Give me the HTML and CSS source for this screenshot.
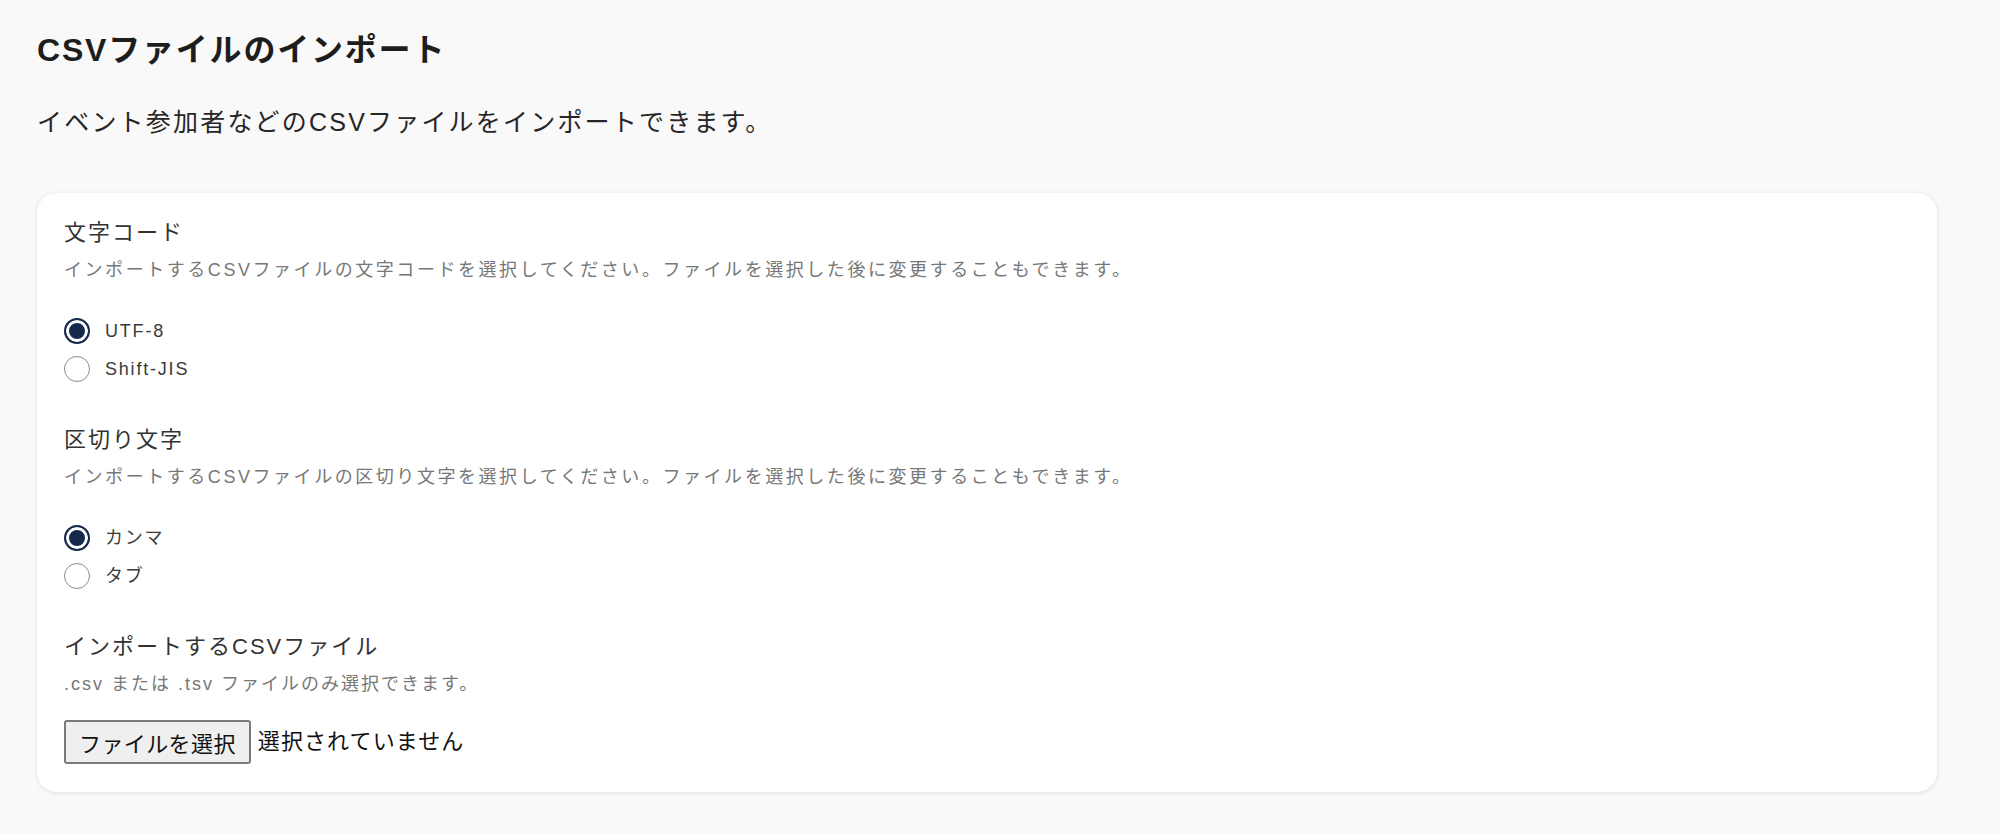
FILE: index.html
```html
<!DOCTYPE html>
<html lang="ja">
<head>
<meta charset="utf-8">
<title>CSVファイルのインポート</title>
<link rel="stylesheet" href="styles.css">
</head>
<body>
<main class="page">
  <h1 class="page-title">CSVファイルのインポート</h1>
  <p class="page-lead">イベント参加者などのCSVファイルをインポートできます。</p>

  <section class="card">
    <div class="field">
      <div class="field-label">文字コード</div>
      <p class="field-help">インポートするCSVファイルの文字コードを選択してください。ファイルを選択した後に変更することもできます。</p>
      <div class="radio-list">
        <label class="radio"><input class="radio-input" type="radio" name="encoding" checked><span class="radio-text">UTF-8</span></label>
        <label class="radio"><input class="radio-input" type="radio" name="encoding"><span class="radio-text">Shift-JIS</span></label>
      </div>
    </div>

    <div class="field">
      <div class="field-label">区切り文字</div>
      <p class="field-help">インポートするCSVファイルの区切り文字を選択してください。ファイルを選択した後に変更することもできます。</p>
      <div class="radio-list">
        <label class="radio"><input class="radio-input" type="radio" name="delimiter" checked><span class="radio-text">カンマ</span></label>
        <label class="radio"><input class="radio-input" type="radio" name="delimiter"><span class="radio-text">タブ</span></label>
      </div>
    </div>

    <div class="field">
      <div class="field-label">インポートするCSVファイル</div>
      <p class="field-help field-help-short">.csv または .tsv ファイルのみ選択できます。</p>
      <div class="file-input">
        <button class="file-button" type="button">ファイルを選択</button>
        <span class="file-status">選択されていません</span>
      </div>
    </div>
  </section>
</main>
</body>
</html>
```

FILE: styles.css
```css
* {
  box-sizing: border-box;
}

html, body {
  margin: 0;
  padding: 0;
  background: #f9f9f9;
}

body {
  font-family: "Liberation Sans", "Noto Sans CJK JP", sans-serif;
  color: #222;
}

.page {
  width: 1937px;
  padding: 29px 0 40px 37px;
}

.page-title {
  margin: 0;
  font-size: 32px;
  line-height: 42px;
  font-weight: 700;
  letter-spacing: 1.8px;
  color: #1d1d1d;
}

.page-lead {
  margin: 33px 0 0;
  font-size: 25px;
  line-height: 36px;
  letter-spacing: 2.2px;
  color: #262626;
}

.card {
  margin-top: 53px;
  background: #fff;
  border-radius: 20px;
  box-shadow: 0 1px 5px rgba(0, 0, 0, 0.10), 0 0 1px rgba(0, 0, 0, 0.06);
  padding: 24px 27px 28px;
  display: flex;
  flex-direction: column;
  gap: 36px;
}

.field-label {
  font-size: 22px;
  line-height: 32px;
  letter-spacing: 2px;
  color: #333;
}

.field-help {
  margin: 7px 0 0;
  font-size: 18px;
  line-height: 28px;
  letter-spacing: 2.55px;
  color: #777;
}

.field-help-short {
  letter-spacing: 2px;
}

.radio-list {
  margin-top: 28px;
  display: flex;
  flex-direction: column;
}

.radio {
  display: flex;
  align-items: center;
  height: 38px;
  gap: 15px;
}

.radio-input {
  appearance: none;
  -webkit-appearance: none;
  margin: 0;
  width: 26px;
  height: 26px;
  border-radius: 50%;
  border: 1.5px solid #8c8c8c;
  background: #fff;
  flex: none;
}

.radio-input:checked {
  border: 2.5px solid #15294c;
  background: #15294c;
  box-shadow: inset 0 0 0 3px #fff;
}

.radio-text {
  font-size: 18px;
  line-height: 28px;
  letter-spacing: 1.8px;
  color: #3a3a3a;
}

.file-input {
  margin-top: 22px;
  display: flex;
  align-items: center;
  gap: 7px;
}

.file-button {
  height: 44px;
  padding: 0 13px;
  font-family: "Liberation Sans", "Noto Sans CJK JP", sans-serif;
  font-size: 22px;
  letter-spacing: 0.4px;
  color: #111;
  background: #efefef;
  border: 2px solid #7a7a7a;
  border-radius: 3px;
}

.file-status {
  font-size: 22px;
  line-height: 32px;
  letter-spacing: 1.1px;
  color: #111;
}
```
